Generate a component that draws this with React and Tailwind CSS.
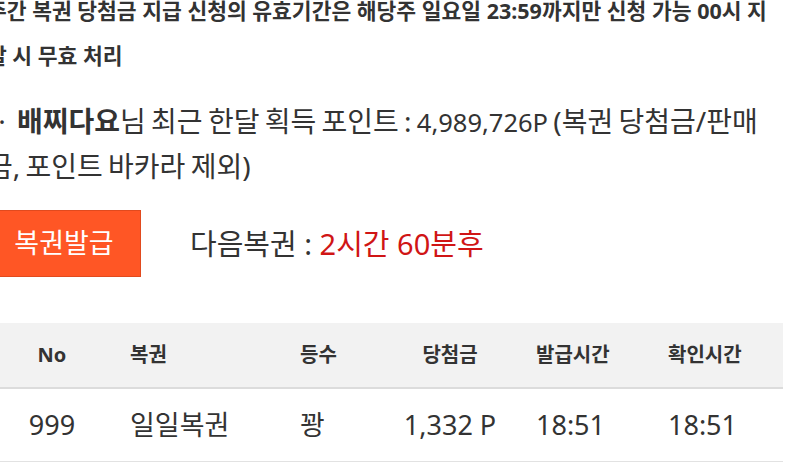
import React from "react";

const rows = [
  { no: 999, name: "일일복권", rank: "꽝", prize: "1,332 P", issued: "18:51", checked: "18:51" },
];

export default function App() {
  return (
    <div className="w-[800px] h-[462px] overflow-hidden bg-white">
      <div
        className="ml-[-13px] mt-[-12px] w-[796px] text-[#333]"
        style={{ fontFamily: '"Noto Sans", "Noto Sans CJK KR", sans-serif' }}
      >
        <p className="text-[21.5px] font-bold leading-[45px]">
          주간 복권 당첨금 지급 신청의 유효기간은 해당주 일요일 23:59까지만 신청 가능 00시 지날 시 무효 처리
        </p>

        <p className="mt-[21px] text-[28px] leading-[44px] [word-spacing:-2px]">
          <span className="inline-block w-[30px] text-center">·</span>
          <b className="font-bold">배찌다요</b>님 최근 한달 획득 포인트 : <span className="text-[25.5px]">4,989,726P</span> (복권 당첨금/판매금, 포인트 바카라 제외)
        </p>

        <div className="mt-[22px] flex items-center">
          <button className="w-[154px] h-[67px] bg-[#ff5625] text-white text-[27px] border border-[#e14a1e]">
            복권발급
          </button>
          <div className="ml-[49px] text-[29px]">
            다음복권 : <span className="text-[#d01515]">2시간 60분후</span>
          </div>
        </div>

        <div className="mt-[46px]">
          <div className="flex h-[66px] items-center bg-[#f2f2f2] border-b-2 border-[#dcdcdc] text-[20px] font-bold">
            <div className="w-[130px] text-center">No</div>
            <div className="w-[183px] pl-[13px]">복권</div>
            <div className="w-[100px]">등수</div>
            <div className="w-[100px] text-center">당첨금</div>
            <div className="w-[132px] pl-[36px]">발급시간</div>
            <div className="flex-1 pl-[36px]">확인시간</div>
          </div>
          {rows.map((r) => (
            <div key={r.no} className="flex h-[74px] items-center border-b-2 border-[#e2e2e2] text-[27px]">
              <div className="w-[130px] text-center">{r.no}</div>
              <div className="w-[183px] pl-[13px]">{r.name}</div>
              <div className="w-[100px]">{r.rank}</div>
              <div className="w-[100px] text-center whitespace-nowrap">{r.prize}</div>
              <div className="w-[132px] pl-[36px]">{r.issued}</div>
              <div className="flex-1 pl-[36px]">{r.checked}</div>
            </div>
          ))}
        </div>
      </div>
    </div>
  );
}
